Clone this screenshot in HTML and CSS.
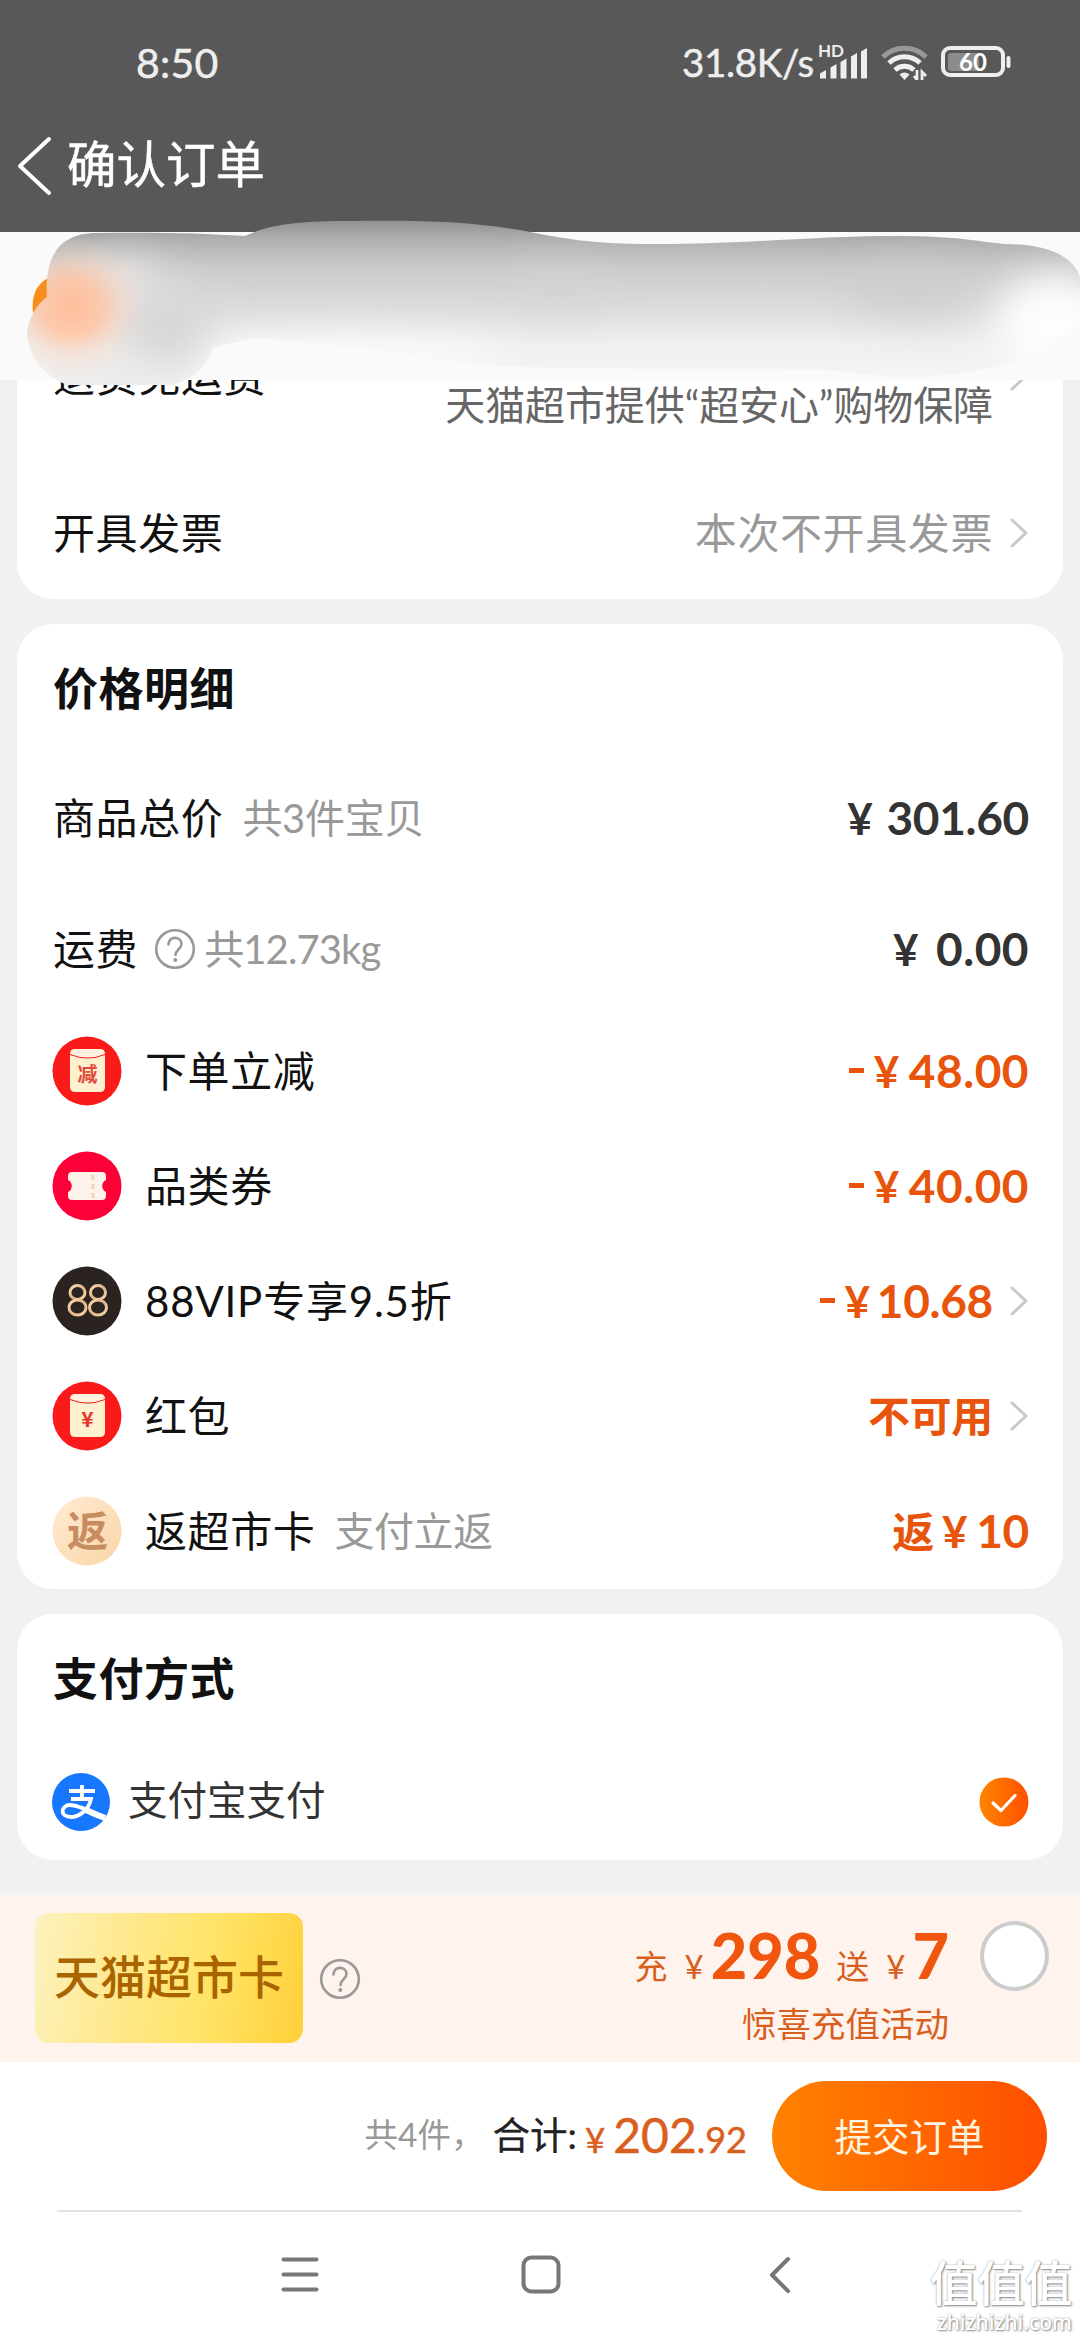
FILE: index.html
```html
<!DOCTYPE html>
<html lang="zh-CN">
<head>
<meta charset="utf-8">
<title>确认订单</title>
<link rel="stylesheet" href="styles.css">
</head>
<body>
<div class="screen">
  <header class="top">
    <div class="status">
      <span class="clock">8:50</span>
      <div class="status-right">
        <span class="speed">31.8K/s</span>
        <svg class="signal" width="52" height="40" viewBox="0 -4 52 40" fill="#eee">
          <text x="0" y="13" class="hd">HD</text>
          <path d="M2 34.500v-5l6-3.500v8.500zM12.500 34.500v-11l6-3.500v14.500zM22.500 34.500v-16.500l6-3.500v20zM33 34.500v-22l6-3.500v25.500zM43 34.500v-27l6-3.500v30.500z"/>
        </svg>
        <svg class="wifi" width="48" height="36" viewBox="0 0 48 36" fill="none" stroke="#eee">
          <path d="M2 13a31 31 0 0 1 43 0" stroke="#999" stroke-width="5"/>
          <path d="M8 19a22.500 22.500 0 0 1 31 0M14 26a14 14 0 0 1 19 0" stroke-width="5"/>
          <path d="M23.500 36l-5-5.500a8 8 0 0 1 10 0z" fill="#eee" stroke="none"/>
          <path d="M36 26v10l-3-4M41 37V28l4 4" stroke-width="2.800"/>
        </svg>
        <svg class="battery" width="70" height="32" viewBox="0 0 70 32">
          <rect x="2" y="2" width="60" height="27" rx="7" fill="none" stroke="#eee" stroke-width="4"/>
          <rect x="7" y="7" width="31" height="18" rx="3" fill="#8c8c8c"/>
          <path d="M67.500 12v8" stroke="#eee" stroke-width="4" stroke-linecap="round"/>
          <text x="32" y="24.500" text-anchor="middle" class="charge">60</text>
        </svg>
      </div>
    </div>
    <div class="titlebar">
      <svg width="36" height="62" viewBox="0 0 36 62" fill="none" stroke="#fff" stroke-width="4" stroke-linecap="round" stroke-linejoin="round"><path d="M32 4L3 31l29 27"/></svg>
      <h1>确认订单</h1>
    </div>
  </header>

  <div class="address">
    <svg class="smudge" width="1080" height="170" viewBox="0 218 1080 170">
      <defs>
        <linearGradient id="mist" x1="0" y1="221" x2="0" y2="378" gradientUnits="userSpaceOnUse">
          <stop offset="0" stop-color="#929292"/><stop offset=".13" stop-color="#b2b2b2"/><stop offset=".3" stop-color="#cbcbcb"/><stop offset=".55" stop-color="#dcdcdc"/><stop offset=".78" stop-color="#efefef"/><stop offset="1" stop-color="#f5f5f5"/>
        </linearGradient>
        <radialGradient id="peach"><stop offset="0" stop-color="#ffbd98"/><stop offset=".4" stop-color="#ffc6a6" stop-opacity=".85"/><stop offset=".7" stop-color="#fbd6c2" stop-opacity=".4"/><stop offset="1" stop-color="#f6ddd0" stop-opacity="0"/></radialGradient>
        <filter id="soft" x="-100%" y="-150%" width="300%" height="400%"><feGaussianBlur stdDeviation="18"/></filter>
        <clipPath id="shape"><path d="M47 297C45 260 56 233 97 233C150 232 200 233 245 236C270 224 300 221 350 221C430 220 470 222 520 230C570 240 590 243 640 244C740 245 810 236 895 236C960 236 980 242 1005 244Q1060 244 1077 270L1080 277V320Q1050 350 1000 366Q930 382 861 374C820 366 700 370 551 368Q480 366 434 360C370 345 310 343 253 338L213 348Q205 375 173 385H67Q30 370 27 333Q30 310 47 297Z"/></clipPath>
      </defs>
      <path d="M48 278Q30 288 33 313L50 296Z" fill="#fa8e1d"/>
      <g clip-path="url(#shape)">
        <rect x="20" y="218" width="1060" height="170" fill="url(#mist)"/>
        <ellipse cx="165" cy="325" rx="50" ry="45" fill="#d8d8d8" filter="url(#soft)"/>
        <ellipse cx="110" cy="375" rx="80" ry="14" fill="#e6e6e6" filter="url(#soft)"/>
        <ellipse cx="125" cy="280" rx="35" ry="22" fill="#e6e3e2" filter="url(#soft)"/>
        <ellipse cx="350" cy="360" rx="150" ry="20" fill="#fcfcfc" filter="url(#soft)"/>
        <ellipse cx="560" cy="285" rx="50" ry="25" fill="#d3d3d3" opacity=".5" filter="url(#soft)"/>
        <ellipse cx="910" cy="288" rx="60" ry="30" fill="#cbcbcb" opacity=".6" filter="url(#soft)"/>
        <ellipse cx="1055" cy="325" rx="60" ry="50" fill="#fdfdfd" filter="url(#soft)"/>
        <ellipse cx="72" cy="307" rx="76" ry="72" fill="url(#peach)"/>
      </g>
    </svg>
  </div>

  <main class="content">
    <section class="card service">
      <div class="row shipping-cover">
        <span class="label">退货免运费</span>
        <span class="promise">天猫超市提供“超安心”购物保障</span>
        <svg class="arrow" width="19" height="30" viewBox="0 0 19 30"><path d="M2 2l14 13L2 28"/></svg>
      </div>
      <div class="row invoice">
        <span class="label">开具发票</span>
        <span class="value muted">本次不开具发票</span>
        <svg class="arrow" width="19" height="30" viewBox="0 0 19 30"><path d="M2 2l14 13L2 28"/></svg>
      </div>
    </section>

    <section class="card prices">
      <h2>价格明细</h2>
      <div class="row sum">
        <span class="label">商品总价</span><span class="note goods-note">共3件宝贝</span>
        <span class="amount dark"><span class="yen">¥</span>301.60</span>
      </div>
      <div class="row sum">
        <span class="label">运费</span>
        <svg class="help" width="42" height="42" viewBox="0 0 42 42"><circle cx="21" cy="21" r="18.800"/><path d="M14.500 16.500c0-9 13-8.500 13-.5 0 5-6 5.500-6 11"/><circle class="dot" cx="21.300" cy="32" r="2"/></svg>
        <span class="note weight">共12.73kg</span>
        <span class="amount dark wide"><span class="yen">¥</span>0.00</span>
      </div>
      <div class="row deal">
        <svg class="badge" width="70" height="70" viewBox="0 0 70 70"><circle cx="35" cy="35" r="34.500" fill="#fa1a19"/><path d="M18 19v32q0 5 5 5h25q5 0 5-5V19q-17 7-35 0z" fill="#fff0cf"/><path d="M18 18q0-5 5-5h25q5 0 5 5-17 7-35 0z" fill="#fff3df"/><text x="35.500" y="46" class="badge-text" font-size="20" fill="#e04a3c">减</text></svg>
        <span class="label">下单立减</span>
        <span class="amount wide"><span class="minus"></span><span class="yen">¥</span>48.00</span>
      </div>
      <div class="row deal">
        <svg class="badge" width="70" height="70" viewBox="0 0 70 70"><circle cx="35" cy="35" r="34.500" fill="#fd0037"/><path d="M20 21h30q4 0 4 4v4c-5 2-5 10 0 12v4q0 4-4 4H20q-4 0-4-4v-4c5-2 5-10 0-12v-4q0-4 4-4z" fill="#fff2eb"/><path d="M41 24v23" stroke="#f1d4ba" stroke-width="3" stroke-dasharray="5 4"/></svg>
        <span class="label">品类券</span>
        <span class="amount wide"><span class="minus"></span><span class="yen">¥</span>40.00</span>
      </div>
      <div class="row deal">
        <svg class="badge" width="70" height="70" viewBox="0 0 70 70"><defs><linearGradient id="gold" x1="0" y1="0" x2="1" y2="1"><stop stop-color="#fbdcb5"/><stop offset=".5" stop-color="#dfb384"/><stop offset="1" stop-color="#f8d8ae"/></linearGradient></defs><circle cx="35" cy="35" r="34.500" fill="#2b2320"/><g fill="none" stroke="url(#gold)" stroke-width="3"><ellipse cx="25.500" cy="26.500" rx="7.500" ry="7"/><ellipse cx="46" cy="26.500" rx="7.500" ry="7"/><ellipse cx="25.500" cy="41.500" rx="8.500" ry="7.500"/><ellipse cx="46" cy="41.500" rx="8.500" ry="7.500"/></g></svg>
        <span class="label vip">88VIP专享9.5折</span>
        <span class="amount"><span class="minus"></span><span class="yen tight">¥</span>10.68</span>
        <svg class="arrow" width="19" height="30" viewBox="0 0 19 30"><path d="M2 2l14 13L2 28"/></svg>
      </div>
      <div class="row deal">
        <svg class="badge" width="70" height="70" viewBox="0 0 70 70"><circle cx="35" cy="35" r="34.500" fill="#fa1a19"/><path d="M18 19v32q0 5 5 5h25q5 0 5-5V19q-17 7-35 0z" fill="#fff0cf"/><path d="M18 18q0-5 5-5h25q5 0 5 5-17 7-35 0z" fill="#fff3df"/><text x="35.500" y="46" class="badge-text" font-size="21" fill="#e5352b">¥</text></svg>
        <span class="label">红包</span>
        <span class="amount words">不可用</span>
        <svg class="arrow" width="19" height="30" viewBox="0 0 19 30"><path d="M2 2l14 13L2 28"/></svg>
      </div>
      <div class="row deal">
        <svg class="badge" width="70" height="70" viewBox="0 0 70 70"><defs><linearGradient id="cream" x1="0" y1="0" x2="1" y2="1"><stop stop-color="#ffebd3"/><stop offset="1" stop-color="#fad5a6"/></linearGradient></defs><circle cx="35" cy="35" r="34.500" fill="url(#cream)"/><text x="35.500" y="50" class="badge-text" font-size="41" fill="#c78c61">返</text></svg>
        <span class="label">返超市卡</span><span class="note rebate">支付立返</span>
        <span class="amount"><span class="words">返</span><span class="yen back">¥</span>10</span>
      </div>
    </section>

    <section class="card payment">
      <h2>支付方式</h2>
      <div class="row pay">
        <svg class="alipay" width="58" height="58" viewBox="0 0 58 58"><circle cx="29" cy="29" r="29" fill="#1777fe"/><path d="M53 45Q42 41 33 36.500" fill="none" stroke="#fff" stroke-width="6"/><path d="M17 18h26M30 12v14M19 26h20c-2 10-11 18-20 18-12 0-10-12-1-12 7 0 15 4 35 12" fill="none" stroke="#fff" stroke-width="3.800"/></svg>
        <span class="pay-name">支付宝支付</span>
        <svg class="check" width="50" height="50" viewBox="0 0 50 50"><defs><linearGradient id="tick"><stop stop-color="#ff8500"/><stop offset="1" stop-color="#ff5000"/></linearGradient></defs><circle cx="25" cy="25" r="24.500" fill="url(#tick)"/><path d="M14 26l8 7.500 14-15" fill="none" stroke="#fff" stroke-width="3.200" stroke-linecap="round" stroke-linejoin="round"/></svg>
      </div>
    </section>
  </main>

  <aside class="promo">
    <div class="gift-card">天猫超市卡</div>
    <svg class="help" width="42" height="42" viewBox="0 0 42 42"><circle cx="21" cy="21" r="18.800"/><path d="M14.500 16.500c0-9 13-8.500 13-.5 0 5-6 5.500-6 11"/><circle class="dot" cx="21.300" cy="32" r="2"/></svg>
    <div class="offer">
      <div class="offer-main"><span>充</span><span class="offer-yen">¥</span><b>298</b><span class="gift">送</span><span class="offer-yen">¥</span><b>7</b></div>
      <div class="offer-sub">惊喜充值活动</div>
    </div>
    <span class="radio"></span>
  </aside>

  <footer class="checkout">
    <span class="count">共4件，</span>
    <span class="total-label">合计:</span>
    <span class="total"><span class="total-yen">¥</span><span class="total-int">202</span>.92</span>
    <button class="submit">提交订单</button>
  </footer>

  <nav class="system">
    <svg width="38" height="38" viewBox="0 0 38 38"><path d="M2.500 3.500h33M2.500 18.500h33M2.500 33.500h33"/></svg>
    <svg width="40" height="40" viewBox="0 0 40 40"><rect x="2.500" y="2.500" width="35" height="34" rx="8"/></svg>
    <svg class="nav-back" width="24" height="38" viewBox="0 0 24 38"><path d="M20 3L4 19l16 16"/></svg>
  </nav>
  <div class="watermark"><span class="mark-cn">值值值</span><span class="mark-url">zhizhizhi.com</span></div>
</div>
</body>
</html>
```
FILE: styles.css
```css
* { box-sizing: border-box; }
body { margin: 0; background: #f1f1f1; }
.screen {
  position: relative; width: 1080px; height: 2340px; overflow: hidden;
  display: flex; flex-direction: column;
  background: #f1f1f1; color: #111;
  font-family: Lato, "Noto Sans CJK SC", sans-serif;
  line-height: 1;
}
svg { display: block; flex: none; }
h1, h2 { margin: 0; }

.top { height: 232px; flex: none; background: #585858; color: #fff; }
.status { display: flex; justify-content: space-between; align-items: center; height: 124px; padding: 0 69px 0 136px; color: #eee; }
.clock { font-size: 41px; letter-spacing: .2px; -webkit-text-stroke: .5px #eee; }
.status-right { display: flex; align-items: center; }
.speed { font-size: 38.500px; letter-spacing: -.3px; margin-right: 4px; -webkit-text-stroke: .5px #eee; }
.hd { font: bold 17px Lato, sans-serif; }
.signal { margin-right: 11px; margin-top: -4px; }
.wifi { margin-right: 12px; }
.charge { font: bold 24px Lato, sans-serif; fill: #fff; }
.titlebar { display: flex; align-items: center; gap: 14px; height: 84px; padding-left: 17px; }
.titlebar h1 { font-size: 49.500px; font-weight: 400; -webkit-text-stroke: .5px #fff; margin-top: -2px; }

.address { position: relative; z-index: 2; height: 148px; flex: none; background: #fafafa; }
.smudge { position: absolute; left: 0; top: -14px; }

.content { display: flex; flex-direction: column; gap: 25px; padding: 0 17px; height: 1515px; flex: none; }
.card { background: #fff; border-radius: 36px; padding: 0 34px 0 36px; }
.row { display: flex; align-items: center; }
.label { font-size: 42px; letter-spacing: .6px; white-space: nowrap; }
.vip { letter-spacing: .8px; }
h2 { font-size: 45px; font-weight: 700; letter-spacing: .5px; }
.muted { color: #999; }
.arrow { margin-left: 17px; fill: none; stroke: #c8c8c8; stroke-width: 3; stroke-linecap: round; stroke-linejoin: round; }

.service { height: 219px; border-radius: 0 0 36px 36px; }
.shipping-cover { height: 90px; margin-top: -49px; }
.promise { margin-left: auto; font-size: 40px; color: #666; padding-top: 58px; letter-spacing: -.1px; }
.invoice { height: 131px; margin-top: 46px; }
.value { margin-left: auto; font-size: 42px; letter-spacing: .6px; }

.prices { height: 965px; }
.prices h2, .payment h2 { height: 130px; line-height: 130px; }
.prices h2 { margin-bottom: -2px; }
.sum { height: 131px; }
.note { font-size: 40px; color: #999; }
.goods-note { margin-left: 19px; letter-spacing: -.3px; }
.sum .help { margin-left: 16px; }
.weight { margin-left: 8px; letter-spacing: -.9px; }
.rebate { margin-left: 19px; letter-spacing: -.4px; }
.help { fill: none; stroke: #999; stroke-width: 2.6; stroke-linecap: round; }
.help .dot { fill: #999; stroke: none; }
.amount { margin-left: auto; display: flex; align-items: baseline; font-size: 46px; font-weight: 700; color: #e8540c; letter-spacing: -.3px; white-space: nowrap; }
.amount.dark { color: #333; }
.amount.wide { letter-spacing: .5px; }
.dark .yen { margin-right: 14px; }
.yen { margin-right: 9px; font-size: 44px; }
.dark.wide .yen { margin-right: 17px; }
.yen.tight { margin-right: 7px; }
.yen.back { margin: 0 9px 0 8px; }
.minus { width: 15px; height: 5px; margin-right: 10px; background: currentColor; align-self: center; }
.words { font-size: 42px; }
.deal { height: 115px; }
.prices .sum + .deal { margin-top: -1px; }
.badge { margin-right: 23px; margin-left: -1px; }
.badge-text { font-family: "Noto Sans CJK SC", sans-serif; font-weight: 700; text-anchor: middle; }

.payment { height: 246px; }
.pay { height: 116px; }
.pay-name { margin-left: 18px; margin-top: -4px; font-size: 39.500px; color: #333; }
.check { margin-left: auto; }
.alipay { margin-left: -1px; }

.promo { display: flex; align-items: center; height: 167px; flex: none; padding: 0 31px 0 35px; background: #fff3ee; }
.gift-card { width: 268px; height: 130px; margin-top: -1px; line-height: 127px; text-align: center; border-radius: 14px; font-size: 46px; font-weight: 500; color: #a96400; background: linear-gradient(100deg, #fcf2bf, #ffe88a 35%, #ffe365 65%, #ffd039); }
.promo .help { margin-left: 16px; }
.offer { margin-left: auto; color: #d95f20; display: flex; flex-direction: column; align-items: flex-end; }
.offer-main { display: flex; align-items: baseline; font-size: 33px; margin-top: 8px; }
.offer-main b { font-size: 63px; font-weight: 900; color: #f0560e; letter-spacing: 0; }
.offer-yen { margin: 0 7px 0 17px; }
.gift { margin-left: 16px; }
.offer-sub { margin-top: 21px; font-size: 34.500px; }
.radio { width: 69px; height: 70px; margin: 0 0 46px 31px; border: 4px solid #ccc; border-radius: 50%; background: #fff; }

.checkout { display: flex; align-items: center; justify-content: flex-end; height: 148px; flex: none; padding: 0 33px 0 0; background: #fff; }
.count { font-size: 33.500px; color: #999; margin-top: -2px; }
.total-label { margin-left: 8px; margin-top: -3px; font-size: 37.500px; color: #222; -webkit-text-stroke: .3px #222; }
.total { margin-left: 8px; margin-right: 25px; margin-top: -2px; font-size: 36px; color: #d95f20; display: flex; align-items: baseline; -webkit-text-stroke: .5px #d95f20; }
.total-yen { font-size: 35px; margin-right: 8px; }
.total-int { font-size: 48px; }
.submit { width: 275px; height: 110px; padding: 0 0 3px; border: 0; border-radius: 55px; background: linear-gradient(90deg, #ff8200, #ff4e00); color: #fff4df; font: 400 37.500px Lato, "Noto Sans CJK SC", sans-serif; }

.system { display: flex; align-items: center; justify-content: center; gap: 202px; flex: 1; background: #fff; padding-right: 12px; position: relative; }
.system::before { content: ""; position: absolute; top: 0; left: 57px; right: 58px; height: 2px; background: #e2e2e2; }
.system svg { fill: none; stroke: #777; stroke-width: 4; stroke-linecap: round; stroke-linejoin: round; }
.system .nav-back { margin: 0 -5px 0 5px; }
.watermark { position: absolute; right: 8px; bottom: 3px; display: flex; flex-direction: column; align-items: flex-end; color: #fff; text-shadow: 1px 1px 2px #888, 0 0 2px #aaa; font-weight: 500; }
.mark-cn { font-size: 48px; letter-spacing: -.5px; }
.mark-url { font: 500 21px/30px "Noto Sans", sans-serif; }
```
